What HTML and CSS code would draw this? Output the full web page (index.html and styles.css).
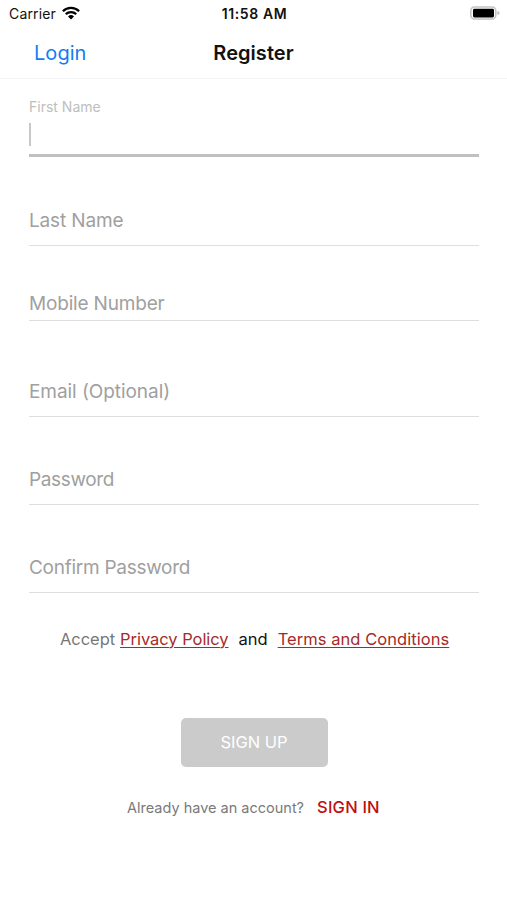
FILE: index.html
```html
<!DOCTYPE html>
<html lang="en">
<head>
<meta charset="utf-8">
<title>Register</title>
<link rel="stylesheet" href="styles.css">
</head>
<body>
<div class="status">
  <div class="carrier"><span class="carrier-name">Carrier</span>
    <svg class="wifi" width="18" height="14" viewBox="0 0 18 14" fill="none" stroke="#000" stroke-width="2.3"><path d="M.9 5.2a11.6 11.6 0 0 1 16.2 0M3.8 8.2a7.5 7.5 0 0 1 10.4 0"/><path d="M9 13.4 6 10.4a4.3 4.3 0 0 1 6 0z" fill="#000" stroke="none"/></svg>
  </div>
  <span class="time">11:58 AM</span>
  <svg class="battery" width="31" height="14" viewBox="0 0 31 14"><rect x="1.8" y="1" width="25" height="12" rx="3.7" fill="#fff" stroke="#c4c4c4" stroke-width="1.6"/><rect x="4" y="2.8" width="21" height="8.6" rx="1.4" fill="#000"/><path d="M28.4 5q2.2.6 2.2 2t-2.2 2z" fill="#bbb"/></svg>
</div>
<header class="nav">
  <a class="login">Login</a>
  <h1 class="title">Register</h1>
</header>
<main class="form">
  <div class="field active"><label class="small-label">First Name</label><span class="caret"></span></div>
  <div class="field"><label class="t-last">Last Name</label></div>
  <div class="field mobile"><label class="t-mobile">Mobile Number</label></div>
  <div class="field email"><label class="t-email">Email (Optional)</label></div>
  <div class="field"><label class="t-password">Password</label></div>
  <div class="field"><label class="t-confirm">Confirm Password</label></div>
  <div class="terms"><span class="accept">Accept</span><a class="privacy">Privacy Policy</a><span class="and">and</span><a class="conditions">Terms and Conditions</a></div>
  <button class="signup"><span class="t-signup">SIGN UP</span></button>
  <div class="account"><span class="already">Already have an account?</span><a class="signin">SIGN IN</a></div>
</main>
</body>
</html>
```
FILE: styles.css
```css
* { box-sizing: border-box; }
body { margin: 0; height: 900px; background: #fff; font-family: Inter, "Liberation Sans", sans-serif; color: #111; overflow: hidden; white-space: nowrap; }
.status { height: 27px; padding: 0 7px 0 9px; display: grid; grid-template-columns: 1fr auto 1fr; align-items: center; font-size: 14px; line-height: 27px; }
.carrier { display: flex; align-items: center; gap: 6px; }
.carrier-name { letter-spacing: .15px; }
.wifi { margin-top: -2px; }
.time { font-weight: 600; font-size: 14px; letter-spacing: .6px; }
.battery { justify-self: end; margin-top: -1px; }
.nav { height: 52px; border-bottom: 1px solid #f4f4f4; display: grid; grid-template-columns: 1fr auto 1fr; align-items: center; padding: 0 34px; line-height: 50px; }
.login { color: #127cf3; font-size: 20px; letter-spacing: .05px; }
.title { margin: 0; font-size: 20px; font-weight: 600; letter-spacing: .05px; }
.form { padding: 0 28px 0 29px; display: flex; flex-direction: column; }
.field { height: 88px; border-bottom: 1px solid #dedede; padding-bottom: 12px; display: flex; flex-direction: column; justify-content: flex-end; align-items: flex-start; color: #a0a0a0; font-size: 19px; line-height: 24px; }
.active { height: 78px; margin-bottom: 1px; border-bottom: 3px solid #c0c0c0; padding-bottom: 8px; }
.small-label { color: #bebebe; font-size: 14px; line-height: 18px; margin-bottom: 7px; }
.caret { width: 2px; height: 23px; background: #c8c8c8; }
.mobile { height: 75px; padding-bottom: 4px; }
.email { height: 96px; }
.t-last { letter-spacing: -.15px; }
.t-mobile { letter-spacing: -.18px; }
.t-email { letter-spacing: -.06px; }
.t-password { letter-spacing: -.35px; }
.t-confirm { letter-spacing: -.27px; }
.terms { height: 24px; margin-top: 34px; padding-left: 31px; display: flex; font-size: 16.5px; line-height: 24px; }
.accept { color: #777; margin-right: 5px; letter-spacing: -.05px; }
.privacy, .conditions { color: #a52a2a; text-decoration: underline; text-decoration-thickness: 1px; text-underline-offset: 2px; }
.privacy { letter-spacing: -.05px; }
.conditions { letter-spacing: .05px; }
.and { margin: 0 10px; }
.signup { width: 147px; height: 49px; margin: 67px 0 0 151.5px; padding: 0; border: 0; border-radius: 5px; background: #cbcbcb; color: #fff; font: 400 16.5px/49px Inter, sans-serif; }
.account { display: flex; margin: 28px 0 0 98px; line-height: 24px; }
.already { position: relative; top: 1px; color: #7a7a7a; font-size: 14.5px; margin-right: 13px; }
.signin { color: #c01010; font-size: 16.5px; font-weight: 500; letter-spacing: .2px; }
```
